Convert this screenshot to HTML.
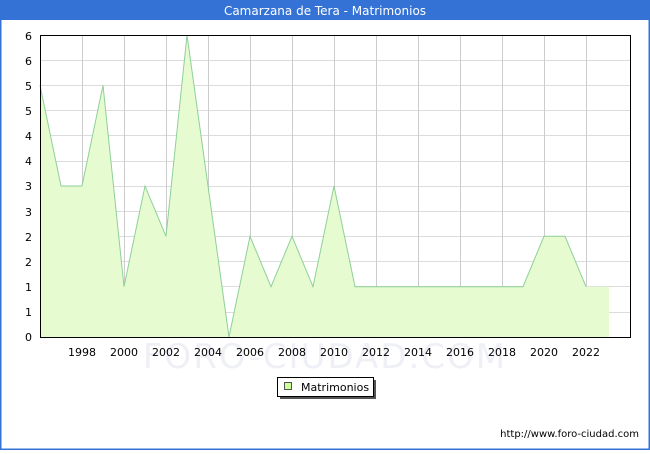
<!DOCTYPE html>
<html><head><meta charset="utf-8"><style>
body{margin:0;width:650px;height:450px;overflow:hidden;background:#fff;font-family:"DejaVu Sans","Liberation Sans",sans-serif;}
</style></head><body>
<svg width="650" height="450" xmlns="http://www.w3.org/2000/svg" font-family="DejaVu Sans, Liberation Sans, sans-serif">
<rect x="0.5" y="0.5" width="649" height="449" fill="#fff" stroke="#3472d6" stroke-width="2"/>
<rect x="0" y="0" width="650" height="20" fill="#3472d6"/>
<text x="325" y="15" fill="#fff" font-size="12" text-anchor="middle">Camarzana de Tera - Matrimonios</text>
<g stroke="#dcdcdc" stroke-width="1">
<line x1="40" y1="60.5" x2="630" y2="60.5"/><line x1="40" y1="85.5" x2="630" y2="85.5"/><line x1="40" y1="110.5" x2="630" y2="110.5"/><line x1="40" y1="135.5" x2="630" y2="135.5"/><line x1="40" y1="161.5" x2="630" y2="161.5"/><line x1="40" y1="186.5" x2="630" y2="186.5"/><line x1="40" y1="211.5" x2="630" y2="211.5"/><line x1="40" y1="236.5" x2="630" y2="236.5"/><line x1="40" y1="261.5" x2="630" y2="261.5"/><line x1="40" y1="286.5" x2="630" y2="286.5"/><line x1="40" y1="312.5" x2="630" y2="312.5"/>
</g>
<g stroke="#cccccc" stroke-width="1">
<line x1="82.5" y1="35" x2="82.5" y2="337"/><line x1="124.5" y1="35" x2="124.5" y2="337"/><line x1="166.5" y1="35" x2="166.5" y2="337"/><line x1="208.5" y1="35" x2="208.5" y2="337"/><line x1="250.5" y1="35" x2="250.5" y2="337"/><line x1="292.5" y1="35" x2="292.5" y2="337"/><line x1="334.5" y1="35" x2="334.5" y2="337"/><line x1="376.5" y1="35" x2="376.5" y2="337"/><line x1="418.5" y1="35" x2="418.5" y2="337"/><line x1="460.5" y1="35" x2="460.5" y2="337"/><line x1="502.5" y1="35" x2="502.5" y2="337"/><line x1="544.5" y1="35" x2="544.5" y2="337"/><line x1="586.5" y1="35" x2="586.5" y2="337"/>
</g>
<polygon fill="#e6fcd0" points="40,337 40,85.3 61,186 82,186 103,85.3 124,286.7 145,186 166,236.3 187,35 208,186 229,337 250,236.3 271,286.7 292,236.3 313,286.7 334,186 355,286.7 523,286.7 544,236.3 565,236.3 586,286.7 609,286.7 609,337"/>
<polyline fill="none" stroke="#8fcf9a" stroke-width="1" points="40,85.3 61,186 82,186 103,85.3 124,286.7 145,186 166,236.3 187,35 208,186 229,337 250,236.3 271,286.7 292,236.3 313,286.7 334,186 355,286.7 523,286.7 544,236.3 565,236.3 586,286.7"/>
<text x="325" y="368" fill="#eef0f6" font-size="34" text-anchor="middle" letter-spacing="2">FORO-CIUDAD.COM</text>
<rect x="40.5" y="35.5" width="590" height="302" fill="none" stroke="#000" stroke-width="1"/>
<g font-size="11" fill="#000" text-anchor="end">
<text x="32" y="40">6</text><text x="32" y="65">6</text><text x="32" y="90">5</text><text x="32" y="115">5</text><text x="32" y="140">4</text><text x="32" y="165">4</text><text x="32" y="190">3</text><text x="32" y="216">3</text><text x="32" y="241">2</text><text x="32" y="266">2</text><text x="32" y="291">1</text><text x="32" y="316">1</text><text x="32" y="341">0</text>
</g>
<g font-size="11" fill="#000" text-anchor="middle">
<text x="82" y="356">1998</text><text x="124" y="356">2000</text><text x="166" y="356">2002</text><text x="208" y="356">2004</text><text x="250" y="356">2006</text><text x="292" y="356">2008</text><text x="334" y="356">2010</text><text x="376" y="356">2012</text><text x="418" y="356">2014</text><text x="460" y="356">2016</text><text x="502" y="356">2018</text><text x="544" y="356">2020</text><text x="586" y="356">2022</text>
</g>
<rect x="280" y="380" width="96" height="19" fill="#555"/>
<rect x="277.5" y="377.5" width="96" height="19" fill="#fff" stroke="#000"/>
<rect x="284.5" y="382.5" width="7" height="7" fill="#ccff99" stroke="#555"/>
<text x="301" y="391" font-size="11">Matrimonios</text>
<text x="639" y="437" font-size="10" text-anchor="end">http://www.foro-ciudad.com</text>
</svg>
</body></html>
